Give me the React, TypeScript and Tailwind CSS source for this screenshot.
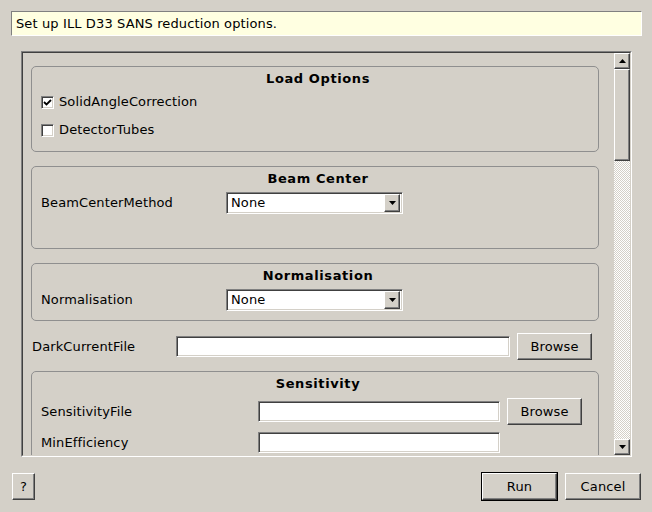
import type { ReactNode } from 'react';

const raised =
  'bg-[#d4d0c8] border border-t-white border-l-white border-b-[#404040] border-r-[#404040] shadow-[inset_-1px_-1px_0_#808080]';
const sunken =
  'bg-white border border-t-[#808080] border-l-[#808080] border-b-white border-r-white shadow-[inset_1px_1px_0_#404040,inset_-1px_-1px_0_#d4d0c8]';

function Button({ label, className = '' }: { label: string; className?: string }) {
  return (
    <div className={`${raised} h-[27px] flex items-center justify-center ${className}`}>
      {label}
    </div>
  );
}

function TextField({ className = '' }: { className?: string }) {
  return <div className={`${sunken} h-[21px] ${className}`} />;
}

function DownArrow() {
  return (
    <svg width="7" height="4" viewBox="0 0 7 4">
      <path d="M0 0H7L3.5 4Z" fill="#000" />
    </svg>
  );
}

function UpArrow() {
  return (
    <svg width="7" height="4" viewBox="0 0 7 4">
      <path d="M0 4H7L3.5 0Z" fill="#000" />
    </svg>
  );
}

function Combo({ value }: { value: string }) {
  return (
    <div className={`${sunken} w-[177px] h-[22px] flex items-center p-[2px]`}>
      <span className="flex-1 pl-[2px]">{value}</span>
      <div className={`${raised} w-[16px] h-[18px] flex items-center justify-center`}>
        <DownArrow />
      </div>
    </div>
  );
}

function CheckBox({ checked, label }: { checked: boolean; label: string }) {
  return (
    <div className="h-[24px] flex items-center gap-[5px]">
      <div className={`${sunken} w-[13px] h-[13px] flex items-center justify-center`}>
        {checked && (
          <svg width="9" height="9" viewBox="0 0 9 9">
            <path d="M1 4 L3.5 6.5 L8 2" stroke="#000" strokeWidth="1.8" fill="none" />
          </svg>
        )}
      </div>
      <span>{label}</span>
    </div>
  );
}

function Group({ title, children, className = '' }: { title: string; children: ReactNode; className?: string }) {
  return (
    <div className={`w-[568px] border border-[#8f8f8f] rounded-[5px] ${className}`}>
      <div className="h-[23px] flex items-center justify-center pl-[6px] font-bold tracking-[0.6px]">{title}</div>
      {children}
    </div>
  );
}

export default function App() {
  return (
    <div className="w-[652px] h-[512px] bg-[#d4d0c8] overflow-hidden flex flex-col font-['DejaVu_Sans',sans-serif] text-[13px] tracking-[0.12px] text-black">
      {/* description */}
      <div className="ml-[11px] mt-[11px] w-[631px] h-[25px] bg-[#ffffe1] border border-t-[#808080] border-l-[#808080] border-b-white border-r-white flex items-center pl-[4px] pt-[1px]">
        Set up ILL D33 SANS reduction options.
      </div>

      {/* scroll area */}
      <div className="ml-[21px] mt-[15px] w-[611px] h-[406px] border border-t-[#808080] border-l-[#808080] border-b-white border-r-white">
        <div className="w-full h-full border border-t-[#404040] border-l-[#404040] border-b-[#d4d0c8] border-r-[#d4d0c8] flex">
          <div className="flex-1 overflow-hidden pt-[13px] pl-[8px]">
            <Group title="Load Options" className="pb-[9px]">
              <div className="pl-[9px] flex flex-col gap-[4px]">
                <CheckBox checked label="SolidAngleCorrection" />
                <CheckBox checked={false} label="DetectorTubes" />
              </div>
            </Group>

            <Group title="Beam Center" className="mt-[14px] pb-[33px]">
              <div className="mt-[1px] h-[24px] pl-[9px] flex items-center">
                <span className="w-[185px]">BeamCenterMethod</span>
                <Combo value="None" />
              </div>
            </Group>

            <Group title="Normalisation" className="mt-[14px] pb-[8px]">
              <div className="mt-[1px] h-[24px] pl-[9px] flex items-center">
                <span className="w-[185px]">Normalisation</span>
                <Combo value="None" />
              </div>
            </Group>

            <div className="mt-[12px] h-[27px] pl-[1px] flex items-center">
              <span className="w-[144px]">DarkCurrentFile</span>
              <TextField className="w-[334px]" />
              <Button label="Browse" className="ml-[7px] w-[75px]" />
            </div>

            <Group title="Sensitivity" className="mt-[11px] pb-[10px]">
              <div className="mt-[3px] pl-[9px] flex flex-col gap-[4px]">
                <div className="h-[27px] flex items-center">
                  <span className="w-[217px]">SensitivityFile</span>
                  <TextField className="w-[242px]" />
                  <Button label="Browse" className="ml-[7px] w-[75px]" />
                </div>
                <div className="h-[27px] flex items-center">
                  <span className="w-[217px]">MinEfficiency</span>
                  <TextField className="w-[242px]" />
                </div>
              </div>
            </Group>
          </div>

          {/* scrollbar */}
          <div className="w-[16px] flex flex-col">
            <div className={`${raised} h-[16px] flex items-center justify-center`}>
              <UpArrow />
            </div>
            <div className={`${raised} h-[92px]`} />
            <div className="flex-1 bg-[repeating-conic-gradient(#d4d0c8_0_25%,#ffffff_0_50%)] bg-[length:2px_2px]" />
            <div className={`${raised} h-[16px] flex items-center justify-center`}>
              <DownArrow />
            </div>
          </div>
        </div>
      </div>

      {/* buttons */}
      <div className="mt-[15px] pl-[12px] pr-[11px] flex items-center">
        <Button label="?" className="w-[23px]" />
        <div className="flex-1" />
        <div className="border border-black">
          <Button label="Run" className="w-[75px]" />
        </div>
        <Button label="Cancel" className="ml-[7px] w-[76px]" />
      </div>
    </div>
  );
}
